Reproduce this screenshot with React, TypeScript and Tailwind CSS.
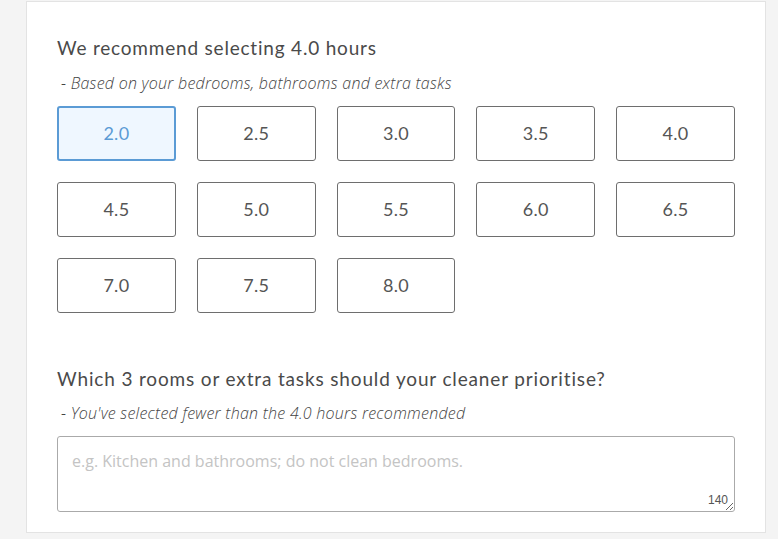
import React from "react";

const hours = ["2.0","2.5","3.0","3.5","4.0","4.5","5.0","5.5","6.0","6.5","7.0","7.5","8.0"];

export default function App() {
  return (
    <div className="w-[778px] h-[539px] bg-[#f4f4f4] overflow-hidden flex">
      <div className="ml-[26px] w-[740px] mt-px h-[532px] bg-white border border-[#e3e3e3] px-[30px] pt-[32px] font-['Lato',sans-serif] text-[#4a4a4a]">
        <h2 className="text-[19px] leading-[28px] font-normal tracking-[0.8px]">We recommend selecting 4.0 hours</h2>
        <p className="mt-[11px] text-[16px] leading-[20px] italic font-light pl-[4px] font-['Open_Sans',sans-serif] tracking-[0.25px] text-[#444]">- Based on your bedrooms, bathrooms and extra tasks</p>
        <div className="mt-[13px] grid grid-cols-5 gap-x-[21px] gap-y-[21px]">
          {hours.map((h, i) => (
            <button
              key={h}
              className={
                i === 0
                  ? "h-[55px] rounded-[3px] border-2 border-[#5b9bd5] bg-[#eff7ff] text-[#5b9bd5] text-[18px] tracking-[0.3px] font-['Lato',sans-serif]"
                  : "h-[55px] rounded-[3px] border border-[#6e6e6e] bg-white text-[#555] text-[18px] tracking-[0.3px] font-['Lato',sans-serif]"
              }
            >
              {h}
            </button>
          ))}
        </div>
        <h2 className="mt-[52px] text-[19px] leading-[28px] font-normal tracking-[0.85px]">Which 3 rooms or extra tasks should your cleaner prioritise?</h2>
        <p className="mt-[10px] text-[16px] leading-[20px] italic font-light pl-[4px] font-['Open_Sans',sans-serif] tracking-[0.25px] text-[#444]">- You've selected fewer than the 4.0 hours recommended</p>
        <div className="relative mt-[13px]">
          <textarea
            placeholder="e.g. Kitchen and bathrooms; do not clean bedrooms."
            className="block w-full h-[76px] resize-y rounded-[3px] border border-[#aaa] px-[14px] py-[12px] text-[16px] leading-[24px] font-['Open_Sans',sans-serif] placeholder:text-[#c4c4c4] outline-none"
          />
          <span className="absolute right-[7px] bottom-[3px] text-[12px] text-[#555] font-['Liberation_Sans',sans-serif]">140</span>
        </div>
      </div>
    </div>
  );
}
